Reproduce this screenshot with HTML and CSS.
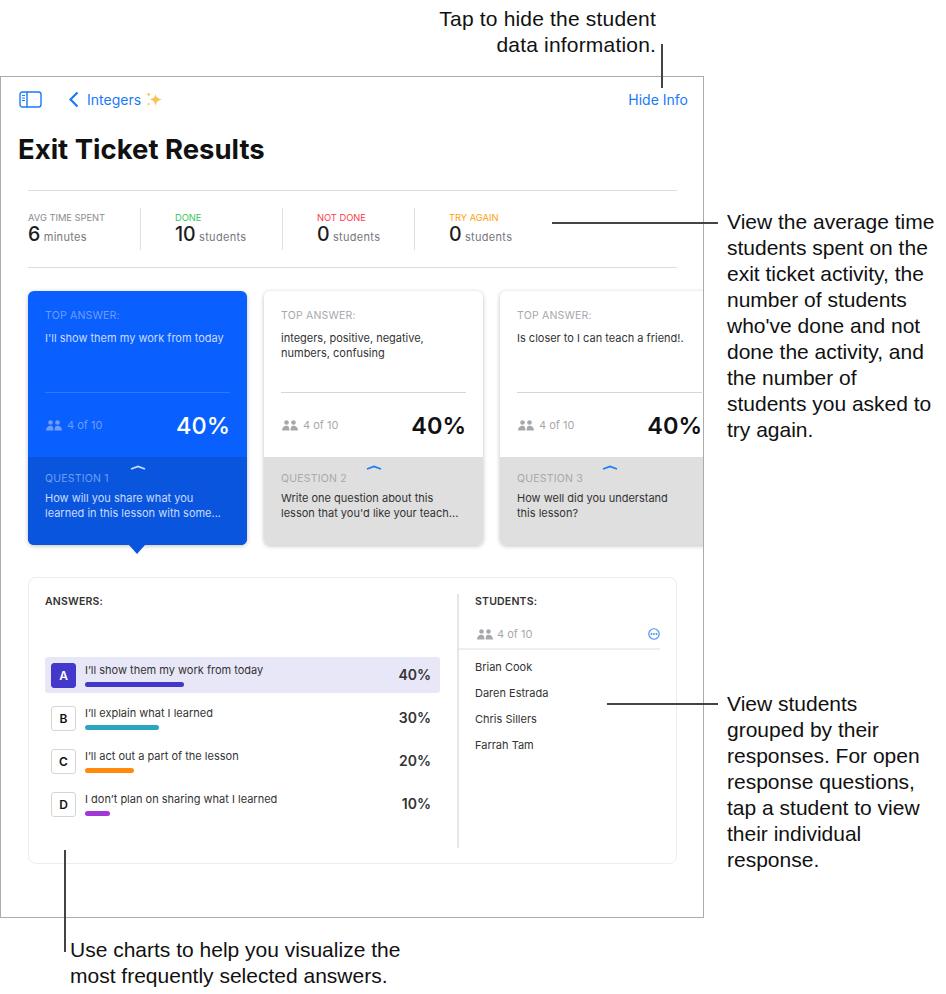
FILE: index.html
```html
<!DOCTYPE html>
<html lang="en">
<head>
    <meta charset="UTF-8">
    <title>Exit Ticket Results</title>
    <link rel="stylesheet" href="styles.css">
</head>
<body>
    <div class="screen">
        <div class="top-bar">
            <div class="top-left">
                <svg class="sidebar-icon" width="24" height="17" viewBox="0 0 24 17" fill="none" stroke="#1a7af8" stroke-width="1.4">
                    <rect x="1" y="1" width="21" height="15" rx="2.5"/>
                    <path d="M8 1v15"/>
                    <path d="M3 4.500h3M3 7h3M3 9.500h3" stroke-width="1.2"/>
                </svg>
                <svg class="back-icon" width="11" height="17" viewBox="0 0 11 17" fill="none" stroke="#1a7af8" stroke-width="2.2">
                    <path d="M9.500 1.500 2.500 8.500l7 7"/>
                </svg>
                <span class="back-label">Integers</span>
                <svg class="sparkle" width="18" height="17" viewBox="0 0 17 16" fill="#f5c451">
                    <path d="M10 2.500c.5 3.200 2 4.800 6.500 5.500-4.500.7-6 2.300-6.500 6.500-.5-4.200-2-5.800-6-6.500 4-.7 5.500-2.300 6-5.500z"/>
                    <path d="M3.500 1c.2 1.300.8 1.900 2 2.200-1.200.3-1.800.9-2 2.200-.2-1.300-.8-1.900-2-2.200 1.200-.3 1.800-.9 2-2.200z"/>
                    <path d="M3.500 10.500c.2 1 .6 1.400 1.500 1.700-.9.3-1.300.7-1.500 1.800-.2-1.100-.6-1.500-1.500-1.800.9-.3 1.300-.7 1.500-1.700z"/>
                </svg>
            </div>
            <span class="hide-info">Hide Info</span>
        </div>

        <h1>Exit Ticket Results</h1>

        <div class="stats">
            <div class="stat stat-time">
                <div class="stat-label">AVG TIME SPENT</div>
                <div class="stat-value"><b>6</b> minutes</div>
            </div>
            <div class="stat stat-done">
                <div class="stat-label green">DONE</div>
                <div class="stat-value"><b>10</b> students</div>
            </div>
            <div class="stat stat-not-done">
                <div class="stat-label red">NOT DONE</div>
                <div class="stat-value"><b>0</b> students</div>
            </div>
            <div class="stat stat-again">
                <div class="stat-label orange">TRY AGAIN</div>
                <div class="stat-value"><b>0</b> students</div>
            </div>
        </div>

        <div class="cards">
            <div class="card selected">
                <div class="card-top">
                    <div class="card-label">TOP ANSWER:</div>
                    <div class="card-text">I'll show them my work from today</div>
                    <div class="card-meta">
                        <span class="count">
                            <svg class="people" width="16" height="11" viewBox="0 0 16 11"><circle cx="4.500" cy="2.500" r="2.300"/><circle cx="11.500" cy="2.500" r="2.300"/><path d="M0 10.500c0-3 2-4.800 4.500-4.800S7.400 7.500 7.400 10.500zM8.600 10.500c0-3 .4-4.800 2.900-4.800s4.500 1.800 4.500 4.800z"/></svg>
                            4 of 10
                        </span>
                        <span class="percent">40%</span>
                    </div>
                </div>
                <div class="card-bottom">
                    <svg class="handle" width="16" height="5" viewBox="0 0 16 5" fill="none"><path d="M1 4 8 1.500 15 4" stroke-width="1.800"/></svg>
                    <div class="card-label">QUESTION 1</div>
                    <div class="card-text">How will you share what you<br>learned in this lesson with some...</div>
                </div>
            </div>
            <div class="card">
                <div class="card-top">
                    <div class="card-label">TOP ANSWER:</div>
                    <div class="card-text">integers, positive, negative,<br>numbers, confusing</div>
                    <div class="card-meta">
                        <span class="count">
                            <svg class="people" width="16" height="11" viewBox="0 0 16 11"><circle cx="4.500" cy="2.500" r="2.300"/><circle cx="11.500" cy="2.500" r="2.300"/><path d="M0 10.500c0-3 2-4.800 4.500-4.800S7.400 7.500 7.400 10.500zM8.600 10.500c0-3 .4-4.800 2.900-4.800s4.500 1.800 4.500 4.800z"/></svg>
                            4 of 10
                        </span>
                        <span class="percent">40%</span>
                    </div>
                </div>
                <div class="card-bottom">
                    <svg class="handle" width="16" height="5" viewBox="0 0 16 5" fill="none"><path d="M1 4 8 1.500 15 4" stroke-width="1.800"/></svg>
                    <div class="card-label">QUESTION 2</div>
                    <div class="card-text">Write one question about this<br>lesson that you'd like your teach...</div>
                </div>
            </div>
            <div class="card">
                <div class="card-top">
                    <div class="card-label">TOP ANSWER:</div>
                    <div class="card-text">Is closer to I can teach a friend!.</div>
                    <div class="card-meta">
                        <span class="count">
                            <svg class="people" width="16" height="11" viewBox="0 0 16 11"><circle cx="4.500" cy="2.500" r="2.300"/><circle cx="11.500" cy="2.500" r="2.300"/><path d="M0 10.500c0-3 2-4.800 4.500-4.800S7.400 7.500 7.400 10.500zM8.600 10.500c0-3 .4-4.800 2.900-4.800s4.500 1.800 4.500 4.800z"/></svg>
                            4 of 10
                        </span>
                        <span class="percent">40%</span>
                    </div>
                </div>
                <div class="card-bottom">
                    <svg class="handle" width="16" height="5" viewBox="0 0 16 5" fill="none"><path d="M1 4 8 1.500 15 4" stroke-width="1.800"/></svg>
                    <div class="card-label">QUESTION 3</div>
                    <div class="card-text">How well did you understand<br>this lesson?</div>
                </div>
            </div>
        </div>

        <div class="panel">
            <div class="answers">
                <div class="panel-title">ANSWERS:</div>
                <div class="answer-list">
                    <div class="answer active">
                        <div class="letter">A</div>
                        <div class="answer-body">
                            <div class="answer-text">I’ll show them my work from today</div>
                            <div class="bar bar-a"></div>
                        </div>
                        <div class="answer-pct">40%</div>
                    </div>
                    <div class="answer">
                        <div class="letter">B</div>
                        <div class="answer-body">
                            <div class="answer-text">I’ll explain what I learned</div>
                            <div class="bar bar-b"></div>
                        </div>
                        <div class="answer-pct">30%</div>
                    </div>
                    <div class="answer">
                        <div class="letter">C</div>
                        <div class="answer-body">
                            <div class="answer-text">I’ll act out a part of the lesson</div>
                            <div class="bar bar-c"></div>
                        </div>
                        <div class="answer-pct">20%</div>
                    </div>
                    <div class="answer">
                        <div class="letter">D</div>
                        <div class="answer-body">
                            <div class="answer-text">I don’t plan on sharing what I learned</div>
                            <div class="bar bar-d"></div>
                        </div>
                        <div class="answer-pct">10%</div>
                    </div>
                </div>
            </div>
            <div class="students">
                <div class="panel-title">STUDENTS:</div>
                <div class="students-head">
                    <span class="count">
                        <svg class="people" width="16" height="11" viewBox="0 0 16 11"><circle cx="4.500" cy="2.500" r="2.300"/><circle cx="11.500" cy="2.500" r="2.300"/><path d="M0 10.500c0-3 2-4.800 4.500-4.800S7.400 7.500 7.400 10.500zM8.600 10.500c0-3 .4-4.800 2.900-4.800s4.500 1.800 4.500 4.800z"/></svg>
                        4 of 10
                    </span>
                    <svg width="12" height="12" viewBox="0 0 12 12"><circle cx="6" cy="6" r="5.200" fill="none" stroke="#3c8af5" stroke-width="1.100"/><circle cx="3.500" cy="6" r=".9" fill="#3c8af5"/><circle cx="6" cy="6" r=".9" fill="#3c8af5"/><circle cx="8.500" cy="6" r=".9" fill="#3c8af5"/></svg>
                </div>
                <div class="student">Brian Cook</div>
                <div class="student">Daren Estrada</div>
                <div class="student">Chris Sillers</div>
                <div class="student">Farrah Tam</div>
            </div>
        </div>
    </div>

    <!-- callouts sit over the screenshot -->
    <div class="callout callout-hide">Tap to hide the student<br>data information.</div>
    <div class="callout callout-stats">View the average time<br>students spent on the<br>exit ticket activity, the<br>number of students<br>who've done and not<br>done the activity, and<br>the number of<br>students you asked to<br>try again.</div>
    <div class="callout callout-students">View students<br>grouped by their<br>responses. For open<br>response questions,<br>tap a student to view<br>their individual<br>response.</div>
    <div class="callout callout-charts">Use charts to help you visualize the<br>most frequently selected answers.</div>
    <div class="line line-hide"></div>
    <div class="line line-stats"></div>
    <div class="line line-students"></div>
    <div class="line line-charts"></div>
</body>
</html>
```

FILE: styles.css
```css
* {
    box-sizing: border-box;
}
html, body {
    height: 994px;
}
body {
    margin: 0;
    padding-top: 76px;
    position: relative;
    overflow: hidden;
    background: white;
    font-family: Inter, "Liberation Sans", sans-serif;
    color: #1c1c1e;
}
.screen {
    width: 704px;
    height: 842px;
    border: 1px solid #ababab;
    overflow: hidden;
    padding: 12px 15px 0 17px;
}
.top-bar {
    display: flex;
    justify-content: space-between;
    align-items: center;
    height: 20px;
    padding-left: 1px;
}
.top-left {
    display: flex;
    align-items: center;
}
.back-icon {
    margin-left: 25px;
}
.back-label {
    margin-left: 8px;
    font-size: 14px;
    color: #1a7af8;
}
.sparkle {
    margin-left: 4px;
}
.hide-info {
    font-size: 14px;
    color: #1a7af8;
}
h1 {
    margin: 24px 0 0;
    font-size: 27.500px;
    line-height: 32px;
    font-weight: 700;
    color: #111;
}
.stats {
    display: flex;
    margin: 25px 10px 0;
    width: 649px;
    height: 78px;
    padding-top: 17px;
    border-top: 1px solid #dcdcdc;
    border-bottom: 1px solid #dcdcdc;
}
.stat {
    height: 42px;
    border-right: 1px solid #e0e0e0;
    padding-top: 3px;
}
.stat-time {
    width: 113px;
}
.stat-done {
    width: 142px;
    padding-left: 34px;
}
.stat-not-done {
    width: 132px;
    padding-left: 34px;
}
.stat-again {
    padding-left: 34px;
    border-right: none;
}
.stat-label {
    font-size: 9.300px;
    line-height: 13px;
    color: #8a8a8e;
}
.green {
    color: #35c759;
}
.red {
    color: #ff3b47;
}
.orange {
    color: #ff9f0a;
}
.stat-value {
    font-size: 11px;
    line-height: 20px;
    color: #77777c;
    letter-spacing: 0.3px;
}
.stat-value b {
    font-size: 19.500px;
    font-weight: 500;
    color: #1c1c1e;
    letter-spacing: 0;
}
.cards {
    display: flex;
    gap: 17px;
    margin: 23px -15px 0 10px;
}
.card {
    flex: 0 0 219px;
    height: 254px;
    border-radius: 6px;
    box-shadow: 0 1px 4px rgba(0, 0, 0, 0.25);
    position: relative;
    background: white;
}
.card-top {
    height: 166px;
    padding: 18px 17px 0;
    position: relative;
}
.card-label {
    font-size: 10.500px;
    line-height: 13px;
    color: #a8a8ac;
    letter-spacing: 0.2px;
}
.card-text {
    margin-top: 9px;
    font-size: 11px;
    line-height: 15.300px;
    color: #333;
}
.card-meta {
    position: absolute;
    left: 17px;
    right: 17px;
    top: 101px;
    height: 65px;
    border-top: 1px solid #d6d6d6;
    display: flex;
    justify-content: space-between;
    align-items: center;
}
.count {
    display: flex;
    align-items: center;
    gap: 5px;
    font-size: 11px;
    color: #a8a8ac;
}
.people {
    fill: #a8a8ac;
    margin-left: 1px;
}
.percent {
    font-size: 23.500px;
    font-weight: 600;
    color: #111;
}
.card-bottom {
    height: 88px;
    padding: 15px 17px 0;
    background: #dfdfdf;
    border-radius: 0 0 6px 6px;
    position: relative;
}
.card-bottom .card-text {
    margin-top: 6px;
}
.handle {
    position: absolute;
    top: 8px;
    left: 102px;
    stroke: #1a7af8;
}
.selected {
    background: #0a5fff;
}
.selected .card-label,
.selected .count {
    color: #6f9dfa;
}
.selected .people {
    fill: #6f9dfa;
}
.selected .card-text {
    color: #c9dcff;
}
.selected .card-meta {
    border-top-color: #2f79ff;
}
.selected .percent {
    color: white;
    font-weight: 500;
}
.selected .card-bottom {
    background: #0955dd;
}
.selected .handle {
    stroke: #c9dcff;
}
.selected::after {
    content: "";
    position: absolute;
    left: 101px;
    bottom: -9px;
    border-left: 8px solid transparent;
    border-right: 8px solid transparent;
    border-top: 9px solid #0955dd;
}
.panel {
    display: flex;
    margin: 32px 10px 0;
    width: 649px;
    height: 287px;
    border: 1px solid #ececec;
    border-radius: 8px;
    padding-top: 16px;
}
.panel-title {
    font-size: 10.500px;
    line-height: 16px;
    font-weight: 600;
    color: #333;
    letter-spacing: 0.2px;
}
.answers {
    width: 430px;
    height: 254px;
    padding-left: 16px;
    border-right: 2px solid #e6e6e6;
}
.answer-list {
    margin-top: 47px;
    width: 395px;
    display: flex;
    flex-direction: column;
    gap: 7px;
}
.answer {
    display: flex;
    align-items: center;
    height: 36px;
    padding: 0 9px 0 6px;
    border-radius: 3px;
}
.active {
    background: #e8e7f8;
}
.letter {
    width: 25px;
    height: 25px;
    border: 1px solid #d5d5d5;
    border-radius: 3px;
    background: white;
    display: flex;
    align-items: center;
    justify-content: center;
    font-size: 12px;
    font-weight: 600;
    color: #111;
}
.active .letter {
    background: #4338c9;
    border-color: #4338c9;
    color: white;
}
.answer-body {
    flex: 1;
    margin-left: 9px;
}
.answer-text {
    font-size: 11px;
    line-height: 14px;
    color: #333;
}
.bar {
    height: 5px;
    margin-top: 5px;
    border-radius: 3px;
}
.bar-a {
    width: 99px;
    background: #4338c9;
}
.bar-b {
    width: 74px;
    background: #2ba6bc;
}
.bar-c {
    width: 49px;
    background: #ff8a0c;
}
.bar-d {
    width: 25px;
    background: #a336d6;
}
.answer-pct {
    margin-bottom: 2px;
    font-size: 14px;
    font-weight: 600;
    color: #333;
}
.students {
    width: 202px;
}
.students .panel-title {
    padding-left: 16px;
}
.students-head {
    display: flex;
    justify-content: space-between;
    align-items: center;
    width: 201px;
    height: 33px;
    margin-top: 7px;
    margin-bottom: 4px;
    padding: 6px 0 3px 17px;
    border-bottom: 2px solid #eeeeee;
}
.students-head .count {
    gap: 4px;
}
.student {
    padding-left: 16px;
    font-size: 11px;
    line-height: 26px;
    color: #333;
}
.callout {
    position: absolute;
    font-family: "Liberation Sans", Arial, sans-serif;
    font-size: 21px;
    line-height: 26px;
    color: #111;
}
.callout-hide {
    top: 6px;
    right: 290px;
    text-align: right;
    letter-spacing: 0.18px;
}
.callout-stats {
    top: 209px;
    left: 727px;
}
.callout-students {
    top: 691px;
    left: 727px;
}
.callout-charts {
    top: 937px;
    left: 70px;
}
.line {
    position: absolute;
    background: #444;
}
.line-hide {
    left: 661px;
    top: 44px;
    width: 2px;
    height: 44px;
}
.line-stats {
    left: 552px;
    top: 222px;
    width: 166px;
    height: 2px;
}
.line-students {
    left: 607px;
    top: 703px;
    width: 111px;
    height: 2px;
}
.line-charts {
    left: 64px;
    top: 850px;
    width: 2px;
    height: 102px;
}
```
